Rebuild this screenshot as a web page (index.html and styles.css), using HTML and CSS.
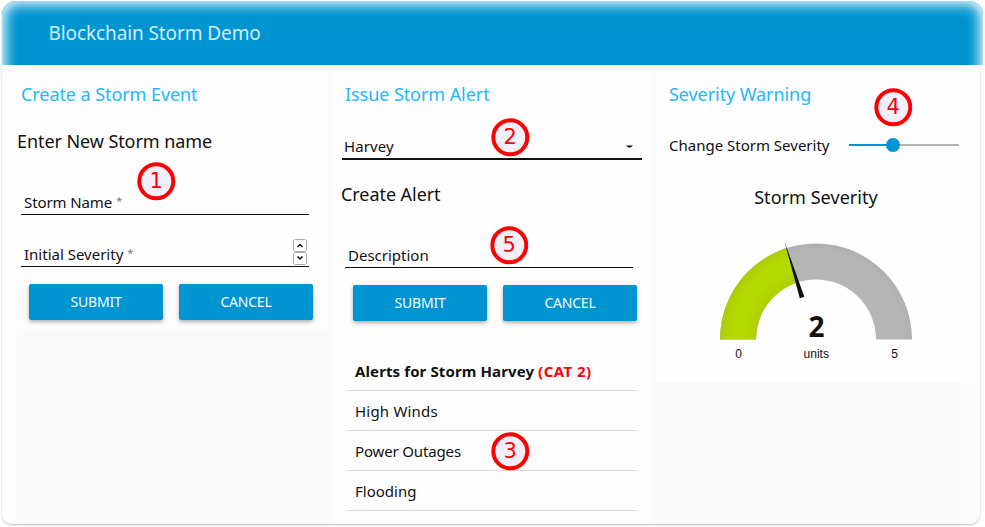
FILE: index.html
```html
<!DOCTYPE html>
<html lang="en">
<head>
<meta charset="utf-8">
<title>Blockchain Storm Demo</title>
<link rel="stylesheet" href="styles.css">
</head>
<body>
<div class="app">
  <header class="toolbar"><h1><span>Blockchain Storm Demo</span></h1></header>
  <main class="columns">
    <section class="card event">
      <h2><span class="t-create">Create a Storm Event</span></h2>
      <h3><span class="t-enter">Enter New Storm name</span></h3>
      <div class="field"><span class="t-name">Storm Name</span><sup>*</sup></div>
      <div class="field second"><span class="t-initial">Initial Severity</span><sup>*</sup>
        <span class="spinner">
          <svg viewBox="0 0 14 13"><rect x=".5" y=".5" width="13" height="12" rx="2"/><path d="M4.5 8 7 5.500 9.500 8"/></svg>
          <svg viewBox="0 0 14 13"><rect x=".5" y=".5" width="13" height="12" rx="2"/><path d="M4.500 4.500 7 7 9.500 4.500"/></svg>
        </span>
      </div>
      <div class="actions"><button><span class="t-submit">SUBMIT</span></button><button><span class="t-cancel">CANCEL</span></button></div>
    </section>
    <section class="card alert">
      <h2><span class="t-issue">Issue Storm Alert</span></h2>
      <div class="select"><span class="t-harvey">Harvey</span><svg class="caret" viewBox="0 0 8 4"><path d="M0 .5h7L4.500 2.500h-2z"/></svg></div>
      <h3><span class="t-alert">Create Alert</span></h3>
      <div class="field"><span class="t-desc">Description</span></div>
      <div class="actions"><button><span class="t-submit">SUBMIT</span></button><button><span class="t-cancel">CANCEL</span></button></div>
      <ul class="alerts">
        <li class="head"><span class="t-head">Alerts for Storm Harvey</span><span class="cat">(CAT 2)</span></li>
        <li><span class="t-winds">High Winds</span></li>
        <li><span class="t-power">Power Outages</span></li>
        <li><span class="t-flood">Flooding</span></li>
      </ul>
    </section>
    <section class="card warning">
      <h2><span class="t-warn">Severity Warning</span></h2>
      <div class="slide-row"><span class="t-change">Change Storm Severity</span><div class="slider"><i></i></div></div>
      <h3><span class="t-sev">Storm Severity</span></h3>
      <svg class="gauge" viewBox="656 209 320 173">
        <defs>
          <radialGradient id="gray" gradientUnits="userSpaceOnUse" cx="816" cy="339.500" r="96"><stop offset=".65" stop-color="#b6b6b6"/><stop offset=".93" stop-color="#b4b4b4"/><stop offset="1" stop-color="#b0b0b0"/></radialGradient>
          <radialGradient id="lime" gradientUnits="userSpaceOnUse" cx="816" cy="339.500" r="96"><stop offset=".63" stop-color="#afd000"/><stop offset=".75" stop-color="#b3d900"/><stop offset=".88" stop-color="#b3d900"/><stop offset="1" stop-color="#accc08"/></radialGradient>
        </defs>
        <path fill="url(#gray)" d="M720 339.500A96 96 0 0 1 912 339.500H876A60 60 0 0 0 756 339.500Z"/>
        <path fill="url(#lime)" d="M720 339.500A96 96 0 0 1 786.300 248.200L797.500 282.400A60 60 0 0 0 756 339.500Z"/>
        <path fill="#111" d="M784.500 241.500 804.300 296.700 799.800 298.300Z"/>
        <text class="value" x="816.500" y="337">2</text>
        <text x="738.500" y="358">0</text><text x="816.300" y="358">units</text><text x="894.500" y="358">5</text>
      </svg>
    </section>
  </main>
</div>
<b class="badge b1">1</b><b class="badge b2">2</b><b class="badge b3">3</b><b class="badge b4">4</b><b class="badge b5">5</b>
</body>
</html>
```
FILE: styles.css
```css
* { box-sizing: border-box; }
body { margin: 0; height: 527px; overflow: hidden; background: #fff; color: #111; font: 15px/20px "Noto Sans", sans-serif; position: relative; padding: 1px 2px 0; }
h1, h2, h3, ul { margin: 0; padding: 0; font-weight: 400; }
h1 span, h2 span, h3 span { white-space: nowrap; }
.app { position: relative; width: 978px; height: 523px; background: linear-gradient(90deg, #fff, #fafafa 22px, #fafafa 950px, #fcfcfc); box-shadow: 0 1px 2px rgba(0,0,0,.28); border-radius: 14px 14px 10px 10px; }
.toolbar { position: relative; width: 981px; height: 64px; padding: 19px 0 0 46.5px; overflow: hidden; background: #0094d0; border-radius: 14px 14px 0 0; color: #d0eefa; }
.toolbar::after { content: ""; position: absolute; inset: 0 0 -40px; border-radius: 14px; box-shadow: inset 0 0 13px 3px #fff; }
h1 { font-size: 19px; line-height: 26px; letter-spacing: -.1px; }
.columns { display: grid; grid-template-columns: repeat(3, 320px); gap: 4px; padding: 6px 0 0 6px; align-items: start; }
.card { background: #fefefe; padding: 11px 13px 0; }
.event { height: 258px; }
.alert { height: 452px; }
.warning { height: 311px; }
h2 { font-size: 18px; line-height: 24px; color: #22b8fa; letter-spacing: -.07px; }
h3 { font-size: 18px; line-height: 24px; letter-spacing: -.06px; }
.event h3 { margin: 23px 0 0 -4px; letter-spacing: -.08px; }
.field { width: 288px; height: 23px; margin-top: 39px; padding-left: 3px; border-bottom: 1px solid #111; display: flex; }
.field.second { margin-top: 29px; }
.t-name { letter-spacing: -.1px; }
.t-power { letter-spacing: -.15px; }
.t-winds { letter-spacing: .2px; }
.t-harvey { letter-spacing: .1px; }
.t-submit, .t-cancel { letter-spacing: -.2px; }
sup { font-size: 11px; line-height: 18px; margin-left: 4px; color: #777; }
.spinner { margin: -5px 2px 0 auto; width: 14px; height: 26px; display: flex; flex-direction: column; }
.spinner svg { width: 14px; height: 13px; fill: #fff; stroke: #aaa; }
.spinner path { fill: none; stroke: #111; stroke-width: 1.5; }
.actions { display: flex; gap: 16px; margin: 17px 0 0 8px; width: 284px; }
button { width: 134px; height: 36px; border: 0; border-radius: 2px; padding: 0; background: #0094d0; color: #f2fbff; font: 14px/36px "Noto Sans", sans-serif; box-shadow: 0 2px 4px rgba(0,0,0,.32); }
.select { margin: 30px 0 0 -3px; width: 300px; height: 24px; padding: 0 8px 0 2px; border-bottom: 2px solid #111; display: flex; justify-content: space-between; }
.caret { width: 8px; height: 4px; margin-top: 9px; }
.alert h3 { margin: 22px 0 0 -4px; }
.alerts { list-style: none; width: 290px; margin: 30px 0 0 2px; }
.alerts li { height: 40px; border-bottom: 1px solid #dadada; padding: 10px 0 0 8px; white-space: nowrap; display: flex; }
.head { font-weight: 700; letter-spacing: .11px; }
.cat { color: #f00; margin-left: 4px; letter-spacing: .45px; }
.slide-row { display: flex; width: 290px; margin-top: 29px; height: 20px; justify-content: space-between; align-items: center; white-space: nowrap; }
.slider { width: 110px; height: 2px; background: linear-gradient(90deg, #0094d0 44px, #b3b3b3 44px); padding-left: 37px; }
.slider i { display: block; width: 14px; height: 14px; margin-top: -6px; border-radius: 50%; background: #0094d0; }
.warning h3 { margin-top: 30px; text-align: center; letter-spacing: .05px; }
.gauge { display: block; width: 320px; height: 173px; margin-left: -13px; }
.gauge text { font: 12px "Liberation Sans", sans-serif; text-anchor: middle; fill: #111; }
.gauge .value { font: 700 28px "Noto Sans", sans-serif; }
.badge { position: absolute; width: 38px; height: 38px; border: 4px solid #f00; border-radius: 50%; background: #f0f0fd; color: #f00; font: 400 21px/30px "DejaVu Sans", sans-serif; text-align: center; transform: translate(.3px, .3px); }
.b1 { left: 137px; top: 162px; }
.b2 { left: 491px; top: 118px; }
.b3 { left: 491px; top: 432px; }
.b4 { left: 874px; top: 88px; }
.b5 { left: 490px; top: 226px; }
```
